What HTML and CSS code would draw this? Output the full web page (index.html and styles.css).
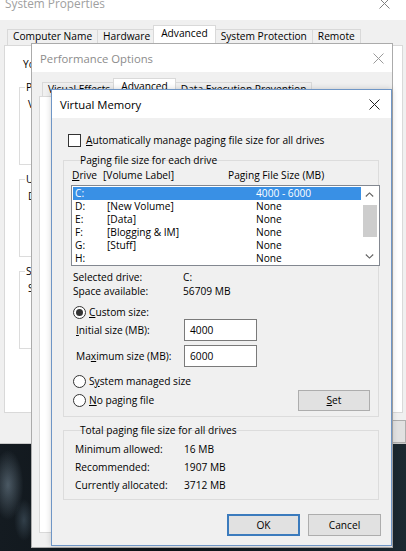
FILE: index.html
```html
<!DOCTYPE html>
<html>
<head>
<meta charset="utf-8">
<title>Virtual Memory</title>
<link rel="stylesheet" href="styles.css">
</head>
<body>
<div class="desktop">

  <section class="win sys">
    <div class="titlebar sys-tb">
      <span class="title">System Properties</span>
      <svg class="x" viewBox="0 0 11 11"><path d="M0.5 0.5L10.5 10.5M10.5 0.5L0.5 10.5"/></svg>
    </div>
    <div class="tabs sys-tabs">
      <span class="tab">Computer Name</span>
      <span class="tab">Hardware</span>
      <span class="tab sel">Advanced</span>
      <span class="tab">System Protection</span>
      <span class="tab">Remote</span>
    </div>
    <div class="panel sys-panel">
      <p class="intro">You must be logged on as an Administrator to make most of these changes.</p>
      <div class="sgrp">
        <div class="legend">Performance</div>
        <p class="sdesc">Visual effects, processor scheduling, memory usage, and virtual memory</p>
      </div>
      <div class="sgrp">
        <div class="legend">User Profiles</div>
        <p class="sdesc">Desktop settings related to your sign-in</p>
      </div>
      <div class="sgrp">
        <div class="legend">Startup and Recovery</div>
        <p class="sdesc">System startup, system failure, and debugging information</p>
      </div>
    </div>
    <div class="sys-btns">
      <span class="btn">OK</span>
      <span class="btn">Cancel</span>
      <span class="btn">Apply</span>
    </div>
  </section>

  <section class="win perf">
    <div class="titlebar perf-tb">
      <span class="title">Performance Options</span>
      <svg class="x" viewBox="0 0 11 11"><path d="M0.5 0.5L10.5 10.5M10.5 0.5L0.5 10.5"/></svg>
    </div>
    <div class="tabs perf-tabs">
      <span class="tab">Visual Effects</span>
      <span class="tab sel">Advanced</span>
      <span class="tab">Data Execution Prevention</span>
    </div>
    <div class="panel perf-panel"></div>
  </section>

  <section class="win vm">
    <div class="titlebar vm-tb">
      <span class="title">Virtual Memory</span>
      <svg class="x" viewBox="0 0 11 11"><path d="M0.5 0.5L10.5 10.5M10.5 0.5L0.5 10.5"/></svg>
    </div>
    <div class="vm-body">
      <div class="chk-row">
        <span class="chk"></span>
        <span><u>A</u>utomatically manage paging file size for all drives</span>
      </div>

      <div class="grp pg">
        <div class="legend">Paging file size for each drive</div>
        <div class="lb-head">
          <span><u>D</u>rive</span>
          <span>[Volume Label]</span>
          <span>Paging File Size (MB)</span>
        </div>
        <div class="lb">
          <div class="lb-rows">
            <div class="row sel"><span>C:</span><span></span><span>4000 - 6000</span></div>
            <div class="row"><span>D:</span><span>[New Volume]</span><span>None</span></div>
            <div class="row"><span>E:</span><span>[Data]</span><span>None</span></div>
            <div class="row"><span>F:</span><span>[Blogging &amp; IM]</span><span>None</span></div>
            <div class="row"><span>G:</span><span>[Stuff]</span><span>None</span></div>
            <div class="row"><span>H:</span><span></span><span>None</span></div>
          </div>
          <div class="sb">
            <div class="sb-btn"><svg width="9" height="5" viewBox="0 0 9 5"><path d="M0.8 4.5L4.5 0.9L8.2 4.5"/></svg></div>
            <div class="sb-thumb"></div>
            <div class="sb-btn sb-down"><svg width="9" height="5" viewBox="0 0 9 5"><path d="M0.8 0.5L4.5 4.1L8.2 0.5"/></svg></div>
          </div>
        </div>
        <div class="kv first"><span class="k">Selected drive:</span><span>C:</span></div>
        <div class="kv"><span class="k">Space available:</span><span>56709 MB</span></div>

        <div class="radio-row custom"><span class="radio on"></span><span><u>C</u>ustom size:</span></div>
        <div class="field-row"><span class="flabel"><u>I</u>nitial size (MB):</span><span class="input">4000</span></div>
        <div class="field-row second"><span class="flabel">Ma<u>x</u>imum size (MB):</span><span class="input">6000</span></div>
        <div class="radio-row sysman"><span class="radio"></span><span>S<u>y</u>stem managed size</span></div>
        <div class="radio-row nopage">
          <span class="radio"></span><span><u>N</u>o paging file</span>
          <span class="btn set"><u>S</u>et</span>
        </div>
      </div>

      <div class="grp total">
        <div class="legend">Total paging file size for all drives</div>
        <div class="tv first"><span class="k">Minimum allowed:</span><span>16 MB</span></div>
        <div class="tv"><span class="k">Recommended:</span><span>1907 MB</span></div>
        <div class="tv"><span class="k">Currently allocated:</span><span>3712 MB</span></div>
      </div>

      <div class="vm-btns">
        <span class="btn ok">OK</span>
        <span class="btn">Cancel</span>
      </div>
    </div>
  </section>

</div>
</body>
</html>
```

FILE: styles.css
```css
* { box-sizing: border-box; margin: 0; padding: 0; }

html, body { width: 406px; height: 551px; overflow: hidden; }

body {
  font-family: "Segoe UI", "Open Sans", "Noto Sans", sans-serif;
  font-size: 10.2px;
  line-height: 13px;
  color: #000;
  background: #10171c;
}

u { text-decoration: underline; text-underline-offset: 1px; }

.desktop {
  position: relative;
  width: 406px;
  height: 551px;
  overflow: hidden;
  background:
    radial-gradient(ellipse 22px 50px at 8px 485px, rgba(120,140,155,0.55), rgba(0,0,0,0) 70%),
    radial-gradient(ellipse 14px 30px at 24px 520px, rgba(80,100,115,0.5), rgba(0,0,0,0) 70%),
    linear-gradient(90deg, #141b21 0%, #0d1317 40%, #1b2830 100%);
}

/* ---------- generic window parts ---------- */
.win {
  position: absolute;
  display: flex;
  flex-direction: column;
  background: #f0f0f0;
}

.titlebar {
  flex: none;
  display: flex;
  align-items: center;
  background: #fff;
}

.title { font-size: 11.3px; white-space: nowrap; }

.x {
  width: 11px;
  height: 11px;
  margin-left: auto;
  fill: none;
  stroke-width: 1;
}

.tabs {
  flex: none;
  display: flex;
  align-items: flex-end;
  margin-bottom: -1px;
}

.tab {
  height: 17px;
  padding: 0 5px;
  border: 1px solid #d9d9d9;
  border-bottom: none;
  margin-right: -1px;
  background: #f0f0f0;
  line-height: 12px;
  white-space: nowrap;
}

.tab.sel {
  position: relative;
  z-index: 1;
  height: 21px;
  margin: 0 -1px 0 -2px;
  padding: 0 7px;
  background: #fff;
  line-height: 15px;
}

.panel {
  flex: none;
  background: #fff;
  border: 1px solid #d9d9d9;
}

.legend {
  display: table;
  margin: -7px 0 0 7px;
  padding: 0 1px;
  line-height: 13px;
  white-space: nowrap;
}

.btn {
  display: flex;
  align-items: center;
  justify-content: center;
  background: #e1e1e1;
  border: 1px solid #adadad;
  white-space: nowrap;
}

/* ---------- System Properties (back) ---------- */
.sys {
  z-index: 1;
  left: -1px;
  top: -14px;
  width: 409px;
  height: 458px;
  border: 1px solid #c9c9c9;
}

.sys-tb { height: 33px; padding: 0 17px 0 5px; }
.sys-tb .title { color: #a0a0a0; font-size: 11.8px; }
.sys-tb .x { stroke: #808080; }

.sys-tabs { margin: 5px 0 -1px 7px; }

.sys-panel {
  height: 368px;
  margin: 0 4px;
  padding: 12px 0 0 14px;
}

.intro { padding-left: 4px; white-space: nowrap; }

.sgrp {
  width: 370px;
  height: 78px;
  margin-top: 16px;
  border: 1px solid #dcdcdc;
  background: #fff;
}
.sgrp + .sgrp { margin-top: 14px; }
.sgrp .legend { background: #fff; margin-left: 5px; }
.sdesc { margin: 4px 0 0 8px; white-space: nowrap; }

.sys-btns {
  display: flex;
  justify-content: flex-end;
  gap: 6px;
  margin: 7px 0 0;
  padding-right: 1px;
}
.sys-btns .btn { width: 72px; height: 23px; }

/* ---------- Performance Options (middle) ---------- */
.perf {
  z-index: 2;
  left: 31px;
  top: 43px;
  width: 362px;
  height: 505px;
  border: 1px solid #ababab;
}

.perf-tb { height: 28px; padding: 0 8px 0 8px; }
.perf-tb .title { color: #8c8c8c; }
.perf-tb .x { stroke: #9a9a9a; }

.perf-tabs { margin: 6px 0 -1px 10px; }
.perf-tabs .tab { height: 15px; line-height: 12px; }
.perf-tabs .tab.sel { height: 19px; line-height: 14px; }

.perf-panel {
  height: 437px;
  margin: 0 6px 0 7px;
}

/* ---------- Virtual Memory (front) ---------- */
.vm {
  z-index: 3;
  left: 51px;
  top: 89px;
  width: 341px;
  height: 457px;
  border: 1px solid #6f96c6;
  box-shadow: 0 0 6px rgba(0,0,0,0.18);
}

.vm-tb { height: 28px; padding: 0 11px 0 8px; }
.vm-tb .x { stroke: #222; }

.vm-body {
  flex: 1;
  display: flex;
  flex-direction: column;
  padding: 16px 12px 0 11px;
}

.chk-row {
  display: flex;
  align-items: center;
  gap: 5px;
  height: 13px;
  padding-left: 5px;
  white-space: nowrap;
}

.chk {
  width: 13px;
  height: 13px;
  background: #fff;
  border: 1px solid #333;
}

.grp {
  border: 1px solid #dcdcdc;
  padding: 0 0 0 8px;
}

.pg { margin-top: 13px; padding-bottom: 5px; }

.lb-head {
  display: grid;
  grid-template-columns: 31px 125px auto;
  margin-top: 2px;
  white-space: nowrap;
}

.lb {
  display: flex;
  width: 309px;
  height: 81px;
  margin: 3px 0 0 -1px;
  border: 1px solid #828790;
  background: #fff;
}

.lb-rows { width: 289px; padding: 1px 0 0 1px; }

.row {
  display: grid;
  grid-template-columns: 32px 149px auto;
  height: 13px;
  padding-left: 2px;
  line-height: 13px;
  white-space: nowrap;
}
.row.sel { background: #3990e5; color: #fff; }

.sb {
  width: 17px;
  display: flex;
  flex-direction: column;
  background: #fff;
}
.sb-btn {
  height: 17px;
  display: flex;
  align-items: center;
  justify-content: center;
}
.sb-btn svg { fill: none; stroke: #606060; stroke-width: 1.1; }
.sb-down { margin-top: auto; }
.sb-thumb {
  height: 32px;
  margin: 2px 1px 0 2px;
  background: #cdcdcd;
}

.kv {
  display: grid;
  grid-template-columns: 110px auto;
  padding-left: 1px;
  line-height: 14px;
  white-space: nowrap;
}
.kv.first { margin-top: 4px; }

.radio-row {
  display: flex;
  align-items: center;
  gap: 3px;
  height: 13px;
  padding-left: 1px;
  white-space: nowrap;
}
.radio-row.custom { margin-top: 8px; }
.radio-row.sysman { margin-top: 8px; }
.radio-row.nopage { height: 21px; margin-top: 2px; }

.radio {
  width: 13px;
  height: 13px;
  border: 1px solid #333;
  border-radius: 50%;
  background: #fff;
  display: flex;
  align-items: center;
  justify-content: center;
}
.radio.on::after {
  content: "";
  width: 7px;
  height: 7px;
  border-radius: 50%;
  background: #333;
}

.field-row {
  display: flex;
  align-items: center;
  height: 22px;
  padding-left: 4px;
  white-space: nowrap;
}
.field-row.second { margin-top: 4px; }
.flabel { width: 108px; padding-top: 1px; }

.input {
  width: 73px;
  height: 22px;
  padding-left: 5px;
  border: 1px solid #7a7a7a;
  background: #fff;
  line-height: 20px;
}

.btn.set {
  width: 72px;
  height: 21px;
  margin: 0 8px 0 auto;
}

.total { margin-top: 13px; padding-bottom: 5px; }

.tv {
  display: grid;
  grid-template-columns: 109px auto;
  padding-left: 3px;
  line-height: 18px;
  white-space: nowrap;
}
.tv.first { margin-top: 3px; }

.vm-btns {
  display: flex;
  justify-content: flex-end;
  gap: 8px;
  margin: 14px -2px 0 0;
}
.vm-btns .btn { width: 73px; height: 22px; }
.btn.ok { border: 2px solid #3b7bbd; }
```
